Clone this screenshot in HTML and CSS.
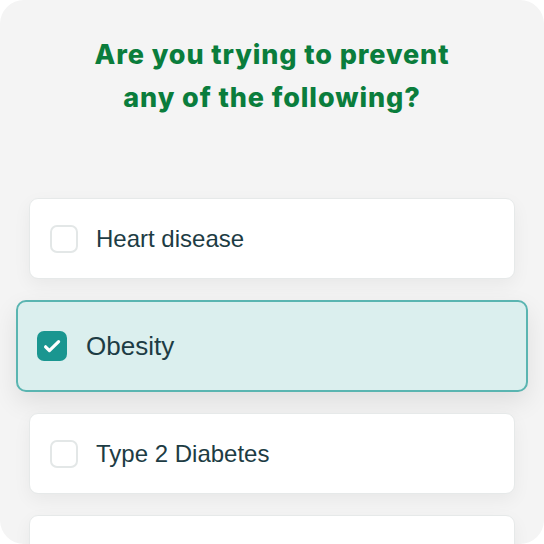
FILE: index.html
```html
<!DOCTYPE html>
<html>
<head>
<meta charset="utf-8">
<link rel="stylesheet" href="styles.css">
</head>
<body>
<div class="panel">
  <h1 class="title">Are you trying to prevent<br>any of the following?</h1>
  <div class="options">
    <div class="option">
      <span class="box"></span>
      <span class="label">Heart disease</span>
    </div>
    <div class="option selected">
      <span class="box checked">
        <svg width="30" height="30" viewBox="0 0 30 30"><path d="M8.6 15.8 L12.4 19.6 L21.6 10.6" fill="none" stroke="#fff" stroke-width="3.2" stroke-linecap="round" stroke-linejoin="round"/></svg>
      </span>
      <span class="label">Obesity</span>
    </div>
    <div class="option">
      <span class="box"></span>
      <span class="label">Type 2 Diabetes</span>
    </div>
    <div class="option"></div>
  </div>
</div>
</body>
</html>
```
FILE: styles.css
```css
html, body {
  margin: 0;
  padding: 0;
  background: #ffffff;
}
body {
  width: 544px;
  height: 544px;
  overflow: hidden;
}
.panel {
  width: 544px;
  height: 544px;
  background: #f4f4f4;
  border-radius: 24px;
  overflow: hidden;
  box-sizing: border-box;
  padding-top: 33px;
}
.title {
  margin: 0;
  text-align: center;
  font-family: "Inter", sans-serif;
  font-weight: 800;
  font-size: 27px;
  line-height: 43px;
  color: #0a7d3c;
  letter-spacing: 0.9px;
}
.options {
  margin-top: 79px;
  display: flex;
  flex-direction: column;
  gap: 21px;
  padding: 0 29px;
}
.option {
  height: 81px;
  box-sizing: border-box;
  background: #ffffff;
  border: 1px solid #e6e9e9;
  border-radius: 9px;
  display: flex;
  align-items: center;
  padding-left: 20px;
  gap: 18px;
  box-shadow: 0 6px 18px rgba(0, 0, 0, 0.05);
  flex-shrink: 0;
}
.box {
  width: 28px;
  height: 28px;
  box-sizing: border-box;
  border: 2px solid #e3e7e7;
  border-radius: 7px;
  background: #fff;
  flex-shrink: 0;
}
.label {
  font-family: "Liberation Sans", Arial, sans-serif;
  font-size: 24px;
  color: #1d3c44;
}
.option.selected {
  height: 92px;
  margin: 0 -13px;
  background: #dbefee;
  border: 2.5px solid #5ab5b1;
  border-radius: 10px;
  padding-left: 19px;
  gap: 19px;
  box-shadow: 0 10px 26px rgba(0, 0, 0, 0.09);
}
.option.selected .label {
  font-size: 26px;
}
.box.checked {
  width: 30px;
  height: 30px;
  border: none;
  background: #1a9690;
  display: flex;
  align-items: center;
  justify-content: center;
}
```
